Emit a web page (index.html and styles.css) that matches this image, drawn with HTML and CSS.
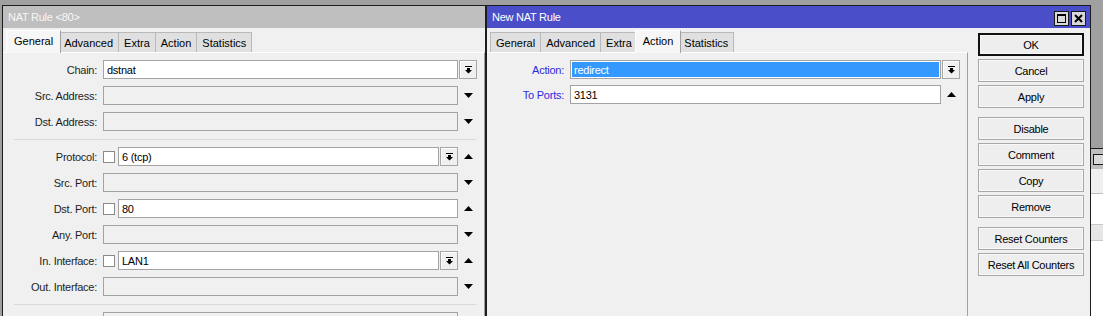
FILE: index.html
```html
<!DOCTYPE html>
<html>
<head>
<meta charset="utf-8">
<link rel="stylesheet" href="styles.css">
</head>
<body>
<div class="desk">
  <section class="win left">
    <header class="title inactive">NAT Rule &lt;80&gt;</header>
    <nav class="tabs tabs-left">
      <span class="tab sel">General</span>
      <span class="tab">Advanced</span>
      <span class="tab">Extra</span>
      <span class="tab">Action</span>
      <span class="tab">Statistics</span>
    </nav>
    <div class="pane">
      <div class="form">
        <div class="row"><label class="lbl">Chain:</label><div class="field on">dstnat</div><span class="slot"><span class="dd"><svg width="7" height="8" viewBox="0 0 7 8"><path d="M0 0h7v1H0zM2 2h3v2h2L3.5 7.5 0 4h2z"/></svg></span></span></div>
        <div class="row"><label class="lbl">Src. Address:</label><div class="field"></div><span class="slot"><svg width="9" height="5" viewBox="0 0 9 5"><path d="M0 0H9L4.5 5Z"/></svg></span></div>
        <div class="row"><label class="lbl">Dst. Address:</label><div class="field"></div><span class="slot"><svg width="9" height="5" viewBox="0 0 9 5"><path d="M0 0H9L4.5 5Z"/></svg></span></div>
        <div class="sep"></div>
        <div class="row"><label class="lbl">Protocol:</label><span class="chk"></span><div class="field on">6 (tcp)</div><span class="slot"><span class="dd"><svg width="7" height="8" viewBox="0 0 7 8"><path d="M0 0h7v1H0zM2 2h3v2h2L3.5 7.5 0 4h2z"/></svg></span></span><span class="slot"><svg width="9" height="5" viewBox="0 0 9 5"><path d="M0 5H9L4.5 0Z"/></svg></span></div>
        <div class="row"><label class="lbl">Src. Port:</label><div class="field"></div><span class="slot"><svg width="9" height="5" viewBox="0 0 9 5"><path d="M0 0H9L4.5 5Z"/></svg></span></div>
        <div class="row"><label class="lbl">Dst. Port:</label><span class="chk"></span><div class="field on">80</div><span class="slot"><svg width="9" height="5" viewBox="0 0 9 5"><path d="M0 5H9L4.5 0Z"/></svg></span></div>
        <div class="row"><label class="lbl">Any. Port:</label><div class="field"></div><span class="slot"><svg width="9" height="5" viewBox="0 0 9 5"><path d="M0 0H9L4.5 5Z"/></svg></span></div>
        <div class="row"><label class="lbl">In. Interface:</label><span class="chk"></span><div class="field on">LAN1</div><span class="slot"><span class="dd"><svg width="7" height="8" viewBox="0 0 7 8"><path d="M0 0h7v1H0zM2 2h3v2h2L3.5 7.5 0 4h2z"/></svg></span></span><span class="slot"><svg width="9" height="5" viewBox="0 0 9 5"><path d="M0 5H9L4.5 0Z"/></svg></span></div>
        <div class="row"><label class="lbl">Out. Interface:</label><div class="field"></div><span class="slot"><svg width="9" height="5" viewBox="0 0 9 5"><path d="M0 0H9L4.5 5Z"/></svg></span></div>
        <div class="sep"></div>
        <div class="row"><span class="lbl"></span><div class="field"></div><span class="slot"><svg width="9" height="5" viewBox="0 0 9 5"><path d="M0 0H9L4.5 5Z"/></svg></span></div>
      </div>
    </div>
  </section>

  <section class="win right">
    <header class="title active">
      <span class="ttext">New NAT Rule</span>
      <span class="ctrls">
        <span class="cbox"><svg width="9" height="9" viewBox="0 0 9 9"><path d="M0 0h9v9H0z M1 2v6h7V2z" fill-rule="evenodd"/></svg></span>
        <span class="cbox"><svg width="9" height="9" viewBox="0 0 9 9"><path d="M1 1L8 8M8 1L1 8" stroke="#000" stroke-width="2"/></svg></span>
      </span>
    </header>
    <div class="body">
      <div class="main">
        <nav class="tabs tabs-right">
          <span class="tab">General</span>
          <span class="tab">Advanced</span>
          <span class="tab">Extra</span>
          <span class="tab sel">Action</span>
          <span class="tab">Statistics</span>
        </nav>
        <div class="pane">
          <div class="form tight">
            <div class="row"><label class="lbl blue">Action:</label><div class="field on selected"><span class="seltext">redirect</span></div><span class="slot"><span class="dd"><svg width="7" height="8" viewBox="0 0 7 8"><path d="M0 0h7v1H0zM2 2h3v2h2L3.5 7.5 0 4h2z"/></svg></span></span></div>
            <div class="row"><label class="lbl blue">To Ports:</label><div class="field on">3131</div><span class="slot"><svg width="9" height="5" viewBox="0 0 9 5"><path d="M0 5H9L4.5 0Z"/></svg></span></div>
          </div>
        </div>
      </div>
      <aside class="btns">
        <span class="btn default">OK</span>
        <span class="btn">Cancel</span>
        <span class="btn">Apply</span>
        <span class="btn grp">Disable</span>
        <span class="btn">Comment</span>
        <span class="btn">Copy</span>
        <span class="btn">Remove</span>
        <span class="btn grp">Reset Counters</span>
        <span class="btn">Reset All Counters</span>
      </aside>
    </div>
  </section>

  <section class="back">
    <div class="back-title"><span class="back-icon"></span></div>
    <div class="back-tool"></div>
    <div class="back-head"></div>
    <div class="back-list"></div>
  </section>
</div>
</body>
</html>
```

FILE: styles.css
```css
html, body {
  margin: 0;
  padding: 0;
}

body {
  background: #a0a0a0;
  font-family: "Liberation Sans", Arial, sans-serif;
  font-size: 11px;
  letter-spacing: -0.25px;
  color: #000;
  height: 316px;
  overflow: hidden;
}

.desk {
  display: flex;
  align-items: flex-start;
  padding: 5px 0 0 2px;
  height: 316px;
  box-sizing: border-box;
}

.win {
  background: #f0f0f0;
  border: 1px solid #1c1c1c;
  border-bottom: none;
  height: 311px;
  box-sizing: border-box;
  display: flex;
  flex-direction: column;
  overflow: hidden;
  flex: none;
}

.left { width: 484px; }
.right { width: 605px; }

.title {
  height: 22px;
  flex: none;
  display: flex;
  align-items: center;
  padding-left: 5px;
  white-space: nowrap;
}

.title.inactive {
  background: #bfbfbf;
  color: #f7f7f7;
}

.title.active {
  background: #4a4fc9;
  color: #ffffff;
  justify-content: space-between;
  padding-right: 4px;
}

.ctrls {
  display: flex;
  gap: 2px;
  margin-top: 3px;
}

.cbox {
  width: 15px;
  height: 15px;
  box-sizing: border-box;
  border: 1px solid #1a1a1a;
  background: #d9d9d9;
  display: flex;
  align-items: center;
  justify-content: center;
}

.tabs {
  height: 24px;
  flex: none;
  display: flex;
  align-items: flex-end;
}

.tabs-left { padding-left: 5px; }
.tabs-right { padding-left: 3px; }

.tab {
  height: 20px;
  box-sizing: border-box;
  border: 1px solid #b9b9b9;
  border-bottom: none;
  background: #e0e0e0;
  padding: 1px 5px 0;
  margin-right: -1px;
  display: flex;
  align-items: center;
  white-space: nowrap;
  letter-spacing: 0;
}

.tab.sel {
  height: 23px;
  margin-bottom: -1px;
  margin-left: -2px;
  margin-right: -3px;
  padding: 0 7px 2px;
  background: #f6f6f6;
  border-color: #ffffff #a0a0a0 transparent #ffffff;
  position: relative;
  z-index: 1;
}

.pane {
  flex: 1;
  border-top: 1px solid #ffffff;
  border-right: 1px solid #a0a0a0;
  padding: 7px 7px 0 0;
}

.body {
  flex: 1;
  display: flex;
}

.main {
  width: 481px;
  display: flex;
  flex-direction: column;
}

.form {
  display: flex;
  flex-direction: column;
  gap: 7px;
}

.form.tight { gap: 6px; }

.row {
  display: flex;
  align-items: center;
  height: 19px;
}

.lbl {
  width: 94px;
  flex: none;
  text-align: right;
  margin-right: 6px;
  white-space: nowrap;
  color: #1e1e1e;
}

.right .lbl { width: 77px; }

.lbl.blue { color: #2a2adf; }

.chk {
  width: 12px;
  height: 12px;
  box-sizing: border-box;
  border: 1px solid #8a8a8a;
  background: #fff;
  flex: none;
  margin-right: 3px;
}

.field {
  flex: 1;
  height: 19px;
  box-sizing: border-box;
  border: 1px solid #a3a3a3;
  background: #f0f0f0;
  padding-left: 3px;
  display: flex;
  align-items: center;
  white-space: nowrap;
}

.field.on { background: #ffffff; }

.field.selected {
  padding: 1px;
  background: #ffffff;
}

.seltext {
  flex: 1;
  align-self: stretch;
  display: flex;
  align-items: center;
  background: #3399ff;
  color: #ffffff;
  padding-left: 2px;
}

.slot {
  width: 19px;
  height: 19px;
  flex: none;
  display: flex;
  align-items: center;
  justify-content: flex-end;
}

.slot > svg {
  margin-right: 4px;
}

.dd {
  width: 18px;
  height: 19px;
  box-sizing: border-box;
  border: 1px solid #a6a6a6;
  background: #f0f0f0;
  box-shadow: inset 1px 1px 0 #ffffff;
  display: flex;
  align-items: center;
  justify-content: center;
}

.sep {
  height: 1px;
  background: #dadada;
  margin: 1px 1px 0 11px;
}

.btns {
  flex: 1;
  display: flex;
  flex-direction: column;
  gap: 3px;
  padding: 5px 0 0 10px;
}

.btn {
  width: 106px;
  height: 23px;
  box-sizing: border-box;
  border: 1px solid #a8a8a8;
  background: #eeeeee;
  box-shadow: inset 0 0 0 1px #f8f8f8;
  display: flex;
  align-items: center;
  justify-content: center;
  white-space: nowrap;
}

.btn.default {
  border: 2px solid #111111;
}

.btn.grp { margin-top: 6px; }

.back {
  flex: 1;
  height: 168px;
  margin-top: 143px;
  border-top: 1px solid #1c1c1c;
  background: #ffffff;
  display: flex;
  flex-direction: column;
}

.back-title {
  height: 20px;
  background: #bfbfbf;
  display: flex;
  align-items: center;
  padding-left: 2px;
}

.back-icon {
  width: 9px;
  height: 9px;
  border: 1px solid #1a1a1a;
  background: #d9d9d9;
}

.back-tool {
  height: 24px;
  background: #f0f0f0;
  border-bottom: 1px solid #c0c0c0;
}

.back-head {
  height: 15px;
  margin-top: 30px;
  background: #e6e6e6;
  border-top: 1px solid #c8c8c8;
  border-bottom: 1px solid #c8c8c8;
}

.back-list {
  flex: 1;
  background: #ffffff;
}
```
